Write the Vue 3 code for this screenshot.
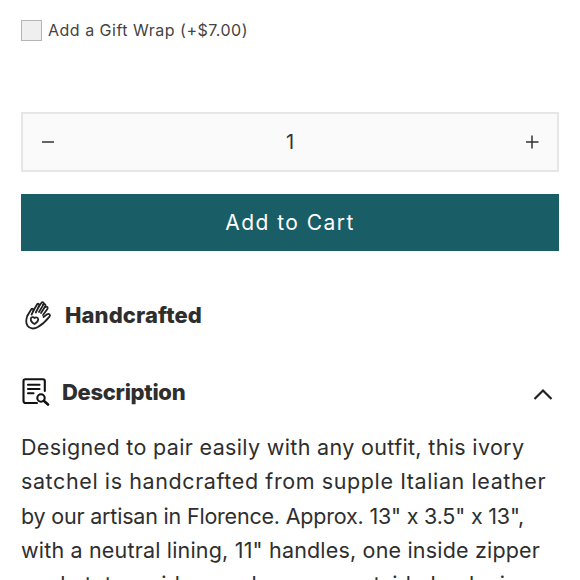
<script setup>
const lines = [
  { text: 'Designed to pair easily with any outfit, this ivory', spacing: 0.34 },
  { text: 'satchel is handcrafted from supple Italian leather', spacing: 0.6 },
  { text: 'by our artisan in Florence. Approx. 13" x 3.5" x 13",', spacing: -0.2 },
  { text: 'with a neutral lining, 11" handles, one inside zipper', spacing: 0.18 },
  { text: 'pocket, two side pouches, one outside back zipper', spacing: 0.3 }
]
</script>

<template>
  <main class="page">
    <label class="gift">
      <span class="box"></span>
      <span class="gift-text">Add a Gift Wrap (+$7.00)</span>
    </label>

    <div class="qty">
      <svg class="qicon" width="14" height="14" viewBox="0 0 14 14"><path d="M1 7H13" stroke="#333" stroke-width="1.5" fill="none"/></svg>
      <span class="qnum">1</span>
      <svg class="qicon" width="14" height="14" viewBox="0 0 14 14"><path d="M1 7H13.5M7 .5V13.5" stroke="#333" stroke-width="1.5" fill="none"/></svg>
    </div>

    <button class="cart">Add to Cart</button>

    <div class="feature">
      <svg class="hand" width="30" height="30" viewBox="0 0 30 30" fill="none" stroke="#222" stroke-width="1.8" stroke-linecap="round" stroke-linejoin="round">
        <path d="M4.5 15.5C3 19 2.8 23 4.5 25.8C6.5 28.8 11 29.3 14.5 27.3C18 25.3 23 21 26.5 16.6C27.8 15 26 13 24.2 14.3L20.5 17"/>
        <path d="M4.5 15.5L8.2 9.5C9.2 8 11.2 9.2 10.4 10.8L8.6 14.5"/>
        <path d="M10.2 11L14 4.5C15 3 17 4.2 16.2 5.8L12.8 12.5"/>
        <path d="M15.5 7L18.5 2.8C19.6 1.4 21.5 2.8 20.6 4.4L16 12"/>
        <path d="M20 4.5C21.2 3.2 23.2 4.6 22.3 6.2L18 13"/>
        <path d="M22.3 7C23.6 5.9 25.4 7.4 24.4 9L20 15"/>
        <path d="M11.5 24C9 22.5 7.5 20.5 7.8 18.8C8.1 17 10.2 16.5 11.5 18C13 16.8 15.2 17.4 15.2 19.4C15.2 21 13.6 22.6 11.5 24Z"/>
      </svg>
      <span class="feature-text">Handcrafted</span>
    </div>

    <div class="desc-head">
      <svg class="doc" width="28" height="28" viewBox="0 0 28 28" fill="none" stroke="#111" stroke-width="2.1" stroke-linecap="round" stroke-linejoin="round">
        <path d="M15 25H3.5C2.4 25 1.5 24.1 1.5 23V2.9C1.5 2 2.2 1.3 3.1 1.3H21C22 1.3 22.8 2.1 22.8 3.1V13"/>
        <path d="M6 6.8H17.5M6 11H17.5M6 15.2H11.5"/>
        <circle cx="19" cy="20" r="3.7"/>
        <path d="M21.8 22.8L26 26.5" stroke-width="2.6"/>
      </svg>
      <span class="desc-title">Description</span>
      <svg class="chev" width="20" height="12" viewBox="0 0 20 12" fill="none"><path d="M1.5 11L10 2.5L18.5 11" stroke="#222" stroke-width="2.2"/></svg>
    </div>

    <div class="desc">
      <p v-for="line in lines" :key="line.text" class="line" :style="{ letterSpacing: line.spacing + 'px' }">{{ line.text }}</p>
    </div>
  </main>
</template>

<style>
html, body { margin: 0; background: #fff; overflow: hidden; }
</style>

<style scoped>
.page {
  height: 580px;
  overflow: hidden;
  box-sizing: border-box;
  padding: 19px 21px 0;
  font-family: "Inter", "Noto Sans", sans-serif;
  color: #2e2e2e;
}
.gift { display: flex; align-items: center; height: 22px; gap: 6px; }
.box {
  width: 21px; height: 21px; box-sizing: border-box;
  background: #efefef; border: 1.5px solid #b5b5b5; flex: none;
}
.gift-text { font-size: 16px; color: #444; letter-spacing: 0.5px; }
.qty {
  margin-top: 71px;
  height: 60px; box-sizing: border-box;
  border: 2px solid #e6e6e6;
  background: #fafafa;
  display: flex; align-items: center; justify-content: space-between;
  padding: 0 18px;
}
.qnum { font-size: 20px; color: #333; }
.cart {
  display: block; width: 100%;
  margin-top: 22px; height: 57px;
  background: #195d66; color: #fff; border: 0; padding: 0;
  font-family: inherit; font-size: 21px; letter-spacing: 1.45px;
}
.feature { display: flex; align-items: center; margin-top: 49px; padding-left: 2px; height: 30px; gap: 12px; }
.feature-text { font-size: 22px; font-weight: 800; color: #2e2e2e; letter-spacing: 0.1px; }
.desc-head { display: flex; align-items: center; margin-top: 47px; height: 30px; padding-left: 1px; }
.desc-title { font-size: 22px; font-weight: 800; margin-left: 12px; flex: 1; letter-spacing: -0.3px; }
.chev { margin-right: 6px; margin-top: 3px; }
.desc { margin-top: 23px; }
.line { margin: 0; font-size: 21.5px; line-height: 34.3px; white-space: nowrap; color: #2e2e2e; }
</style>
